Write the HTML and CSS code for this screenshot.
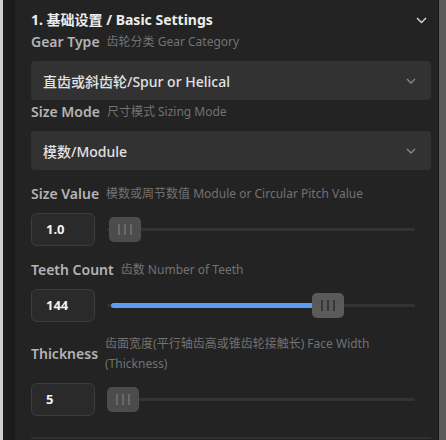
FILE: index.html
```html
<!DOCTYPE html>
<html lang="zh">
<head>
<meta charset="utf-8">
<title>Gear Generator</title>
<link rel="stylesheet" href="styles.css">
</head>
<body>
<div class="frame">
  <div class="edge"></div>
  <div class="rail"></div>
  <main class="panel">
    <section class="group">
      <header class="group-head">
        <h2 class="group-title">1. 基础设置 / Basic Settings</h2>
        <svg class="chev-head" width="11" height="7" viewBox="0 0 11 7"><path d="M1 1l4.5 4.5L10 1" fill="none" stroke="#d8d8d8" stroke-width="1.4"/></svg>
      </header>

      <div class="field field-first">
        <div class="label-row"><span class="label">Gear Type</span><span class="hint">齿轮分类 Gear Category</span></div>
        <div class="select"><span>直齿或斜齿轮/Spur or Helical</span>
          <svg width="10" height="6" viewBox="0 0 10 6"><path d="M1 1l4 4 4-4" fill="none" stroke="#8a8a8a" stroke-width="1.3"/></svg>
        </div>
      </div>

      <div class="field field-tight">
        <div class="label-row"><span class="label">Size Mode</span><span class="hint">尺寸模式 Sizing Mode</span></div>
        <div class="select"><span>模数/Module</span>
          <svg width="10" height="6" viewBox="0 0 10 6"><path d="M1 1l4 4 4-4" fill="none" stroke="#8a8a8a" stroke-width="1.3"/></svg>
        </div>
      </div>

      <div class="field">
        <div class="label-row"><span class="label">Size Value</span><span class="hint">模数或周节数值 Module or Circular Pitch Value</span></div>
        <div class="range-row">
          <div class="num">1.0</div>
          <div class="slider">
            <div class="track"></div>
            <div class="thumb thumb-idle" style="left: 2px"><i></i><i></i><i></i></div>
          </div>
        </div>
      </div>

      <div class="field">
        <div class="label-row"><span class="label">Teeth Count</span><span class="hint">齿数 Number of Teeth</span></div>
        <div class="range-row">
          <div class="num">144</div>
          <div class="slider">
            <div class="track"></div>
            <div class="fill" style="width: 203px"></div>
            <div class="thumb" style="left: 205px"><i></i><i></i><i></i></div>
          </div>
        </div>
      </div>

      <div class="field field-wrap">
        <div class="label-row"><span class="label">Thickness</span><span class="hint hint-wrap">齿面宽度(平行轴齿高或锥齿轮接触长) Face Width (Thickness)</span></div>
        <div class="range-row">
          <div class="num">5</div>
          <div class="slider">
            <div class="track"></div>
            <div class="thumb thumb-idle" style="left: 0px"><i></i><i></i><i></i></div>
          </div>
        </div>
      </div>
    </section>
    <div class="next-group"></div>
  </main>
  <div class="divider"></div>
  <div class="scrollbar"></div>
</div>
</body>
</html>
```

FILE: styles.css
```css
* { box-sizing: border-box; margin: 0; padding: 0; }

html, body {
  width: 446px;
  height: 440px;
  overflow: hidden;
  background: #232323;
  font-family: "Noto Sans", "Noto Sans CJK SC", sans-serif;
}

.frame {
  display: flex;
  height: 440px;
}

.edge { width: 3px; background: #cfcfcf; }
.rail { width: 12px; background: #1b1b1b; }
.divider { width: 1px; background: #171717; }
.scrollbar { width: 7px; background: #5b5b5b; }

.panel {
  flex: 1;
  background: #232323;
  padding: 10px 7px 0 16px;
  display: flex;
  flex-direction: column;
}

.group-head {
  display: flex;
  align-items: center;
  justify-content: space-between;
  height: 20px;
  padding-right: 4px;
}

.group-title {
  font-size: 14px;
  font-weight: 700;
  color: #ededed;
  line-height: 20px;
}

.chev-head { display: block; }

.field { margin-top: 14px; }
.field-first { margin-top: 2px; }
.field-tight { margin-top: 2px; }
.field-wrap { margin-top: 12px; }

.label-row {
  display: flex;
  align-items: center;
  gap: 7px;
  min-height: 20px;
  margin-bottom: 9px;
}

.label {
  font-size: 14px;
  font-weight: 600;
  color: #b4b4b4;
  line-height: 20px;
  white-space: nowrap;
}

.hint {
  font-size: 12px;
  color: #727272;
  line-height: 20px;
}

.hint-wrap { width: 290px; }

.select {
  height: 39px;
  background: #323232;
  border-radius: 4px;
  display: flex;
  align-items: center;
  justify-content: space-between;
  padding: 0 15px 0 12px;
  font-size: 14px;
  font-weight: 500;
  color: #e2e2e2;
}

.select svg { display: block; }

.range-row {
  display: flex;
  align-items: center;
  height: 33px;
}

.num {
  width: 64px;
  height: 33px;
  border: 1px solid #3d3d3d;
  background: #2a2a2a;
  border-radius: 6px;
  font-size: 13px;
  font-weight: 700;
  color: #f2f2f2;
  line-height: 31px;
  padding-left: 14px;
}

.slider {
  position: relative;
  flex: 1;
  height: 25px;
  margin-left: 12px;
  margin-right: 16px;
}

.track {
  position: absolute;
  left: 0;
  right: 0;
  top: 11px;
  height: 3px;
  background: #333333;
  border-radius: 2px;
}

.fill {
  position: absolute;
  left: 4px;
  top: 10px;
  height: 5px;
  background: #5c9cf5;
  border-radius: 3px;
}

.thumb {
  position: absolute;
  top: 0;
  width: 32px;
  height: 25px;
  border-radius: 5px;
  background: #5a5a5a;
  display: flex;
  align-items: center;
  justify-content: center;
  gap: 4px;
}

.thumb i {
  display: block;
  width: 2px;
  height: 11px;
  background: #363636;
}

.thumb-idle { background: #4c4c4c; }
.thumb-idle i { background: #6a6a6a; }

.next-group {
  margin-top: 21px;
  margin-right: 0;
  height: 2px;
  background: #2f2f2f;
}
```
